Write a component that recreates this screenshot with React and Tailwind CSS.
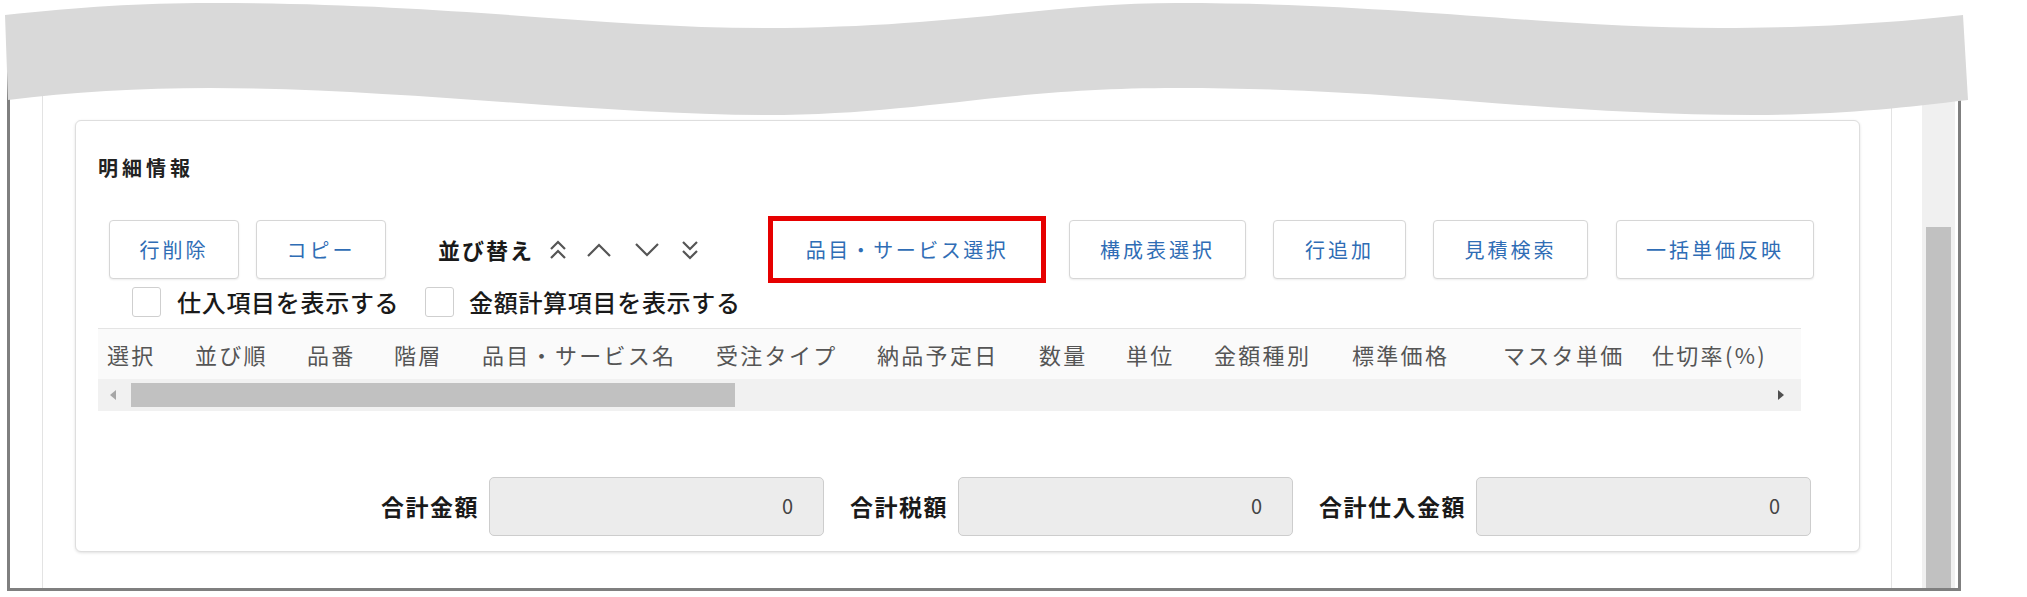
import React from "react";

const columns = [
    { label: "選択", w: "w-[88px]" },
    { label: "並び順", w: "w-[112px]" },
    { label: "品番", w: "w-[87px]" },
    { label: "階層", w: "w-[88px]" },
    { label: "品目・サービス名", w: "w-[234px]" },
    { label: "受注タイプ", w: "w-[161px]" },
    { label: "納品予定日", w: "w-[162px]" },
    { label: "数量", w: "w-[87px]" },
    { label: "単位", w: "w-[88px]" },
    { label: "金額種別", w: "w-[138px]" },
    { label: "標準価格", w: "w-[151px]" },
    { label: "マスタ単価", w: "w-[149px]" },
    { label: "仕切率(%)", w: "w-[120px]" },
];

function ActionButton({ children, className = "" }) {
    return (
        <button
            className={`h-[59px] shrink-0 bg-white border border-[#d6d6d6] rounded-[4px] shadow-[0_1px_2px_rgba(0,0,0,0.08)] text-[#2f6db5] text-[20px] tracking-[3px] ${className}`}
        >
            {children}
        </button>
    );
}

function Checkbox({ className = "" }) {
    return (
        <span className={`block w-[29px] h-[30px] shrink-0 bg-white border border-[#cfcfcf] rounded-[3px] ${className}`} />
    );
}

function TotalField({ label, className = "" }) {
    return (
        <div className={`flex items-center gap-[10px] ${className}`}>
            <span className="text-[23px] tracking-[1.5px] font-bold text-[#1a1a1a]">{label}</span>
            <div className="w-[335px] h-[59px] bg-[#ececec] border border-[#cdcdcd] rounded-[5px] flex items-center justify-end pr-[30px] text-[20px] text-[#444]">
                0
            </div>
        </div>
    );
}

export default function App() {
    return (
        <div className="relative w-[2027px] h-[597px] bg-white overflow-hidden font-['Noto_Sans_CJK_JP',sans-serif]">
            {/* screenshot frame */}
            <div className="pt-[40px] pl-[7px]">
                <div className="w-[1954px] h-[551px] border-[3px] border-t-0 border-[#7f7f7f] bg-white flex">
                    <div className="w-[32px] shrink-0" />
                    <div className="w-[1850px] shrink-0 border-x border-[#e3e3e3] pt-[80px] pl-[32px]">
                        {/* 明細情報 card */}
                        <div className="w-[1785px] bg-white border border-[#dedede] rounded-[6px] shadow-[0_1px_3px_rgba(0,0,0,0.12)] pt-[33px] pl-[22px] pb-[15px]">
                            <h2 className="h-[28px] leading-[28px] text-[20px] tracking-[4px] font-semibold text-[#222]">
                                明細情報
                            </h2>

                            {/* buttons */}
                            <div className="mt-[34px] h-[67px] ml-[11px] flex items-center">
                                <ActionButton className="w-[130px]">行削除</ActionButton>
                                <ActionButton className="w-[130px] ml-[17px]">コピー</ActionButton>
                                <div className="w-[330px] ml-[52px] shrink-0 flex items-center">
                                    <span className="w-[96px] text-[22px] tracking-[2px] font-bold text-[#1a1a1a] whitespace-nowrap">
                                        並び替え
                                    </span>
                                    <svg className="ml-[14px]" width="20" height="22" viewBox="0 0 20 22" fill="none" stroke="#555" strokeWidth="2.2">
                                        <path d="M3 10 L10 3 L17 10" />
                                        <path d="M3 19 L10 12 L17 19" />
                                    </svg>
                                    <svg className="ml-[17px]" width="28" height="16" viewBox="0 0 28 16" fill="none" stroke="#555" strokeWidth="2.2">
                                        <path d="M3 14 L14 3 L25 14" />
                                    </svg>
                                    <svg className="ml-[20px]" width="28" height="16" viewBox="0 0 28 16" fill="none" stroke="#555" strokeWidth="2.2">
                                        <path d="M3 2 L14 13 L25 2" />
                                    </svg>
                                    <svg className="ml-[19px]" width="20" height="22" viewBox="0 0 20 22" fill="none" stroke="#555" strokeWidth="2.2">
                                        <path d="M3 3 L10 10 L17 3" />
                                        <path d="M3 12 L10 19 L17 12" />
                                    </svg>
                                </div>
                                <div className="w-[278px] h-[67px] shrink-0 border-[5px] border-[#e60000] flex items-center justify-center bg-white">
                                    <span className="text-[#2f6db5] text-[20px] tracking-[2.5px]">品目・サービス選択</span>
                                </div>
                                <ActionButton className="w-[177px] ml-[23px]">構成表選択</ActionButton>
                                <ActionButton className="w-[133px] ml-[27px]">行追加</ActionButton>
                                <ActionButton className="w-[155px] ml-[27px]">見積検索</ActionButton>
                                <ActionButton className="w-[198px] ml-[28px]">一括単価反映</ActionButton>
                            </div>

                            {/* checkboxes */}
                            <div className="mt-[4px] h-[30px] flex items-center text-[24px] tracking-[0.7px] font-medium text-[#1a1a1a]">
                                <Checkbox className="ml-[34px]" />
                                <span className="ml-[16px] w-[222px] whitespace-nowrap">仕入項目を表示する</span>
                                <Checkbox className="ml-[26px]" />
                                <span className="ml-[15px] whitespace-nowrap">金額計算項目を表示する</span>
                            </div>

                            {/* table */}
                            <div className="mt-[11px] w-[1703px] border-t border-[#e4e4e4]">
                                <div className="h-[50px] bg-[#fafafa] flex items-center pl-[9px] text-[22px] tracking-[2.3px] text-[#555]">
                                    {columns.map((c) => (
                                        <span key={c.label} className={`${c.w} shrink-0 whitespace-nowrap`}>
                                            {c.label}
                                        </span>
                                    ))}
                                </div>
                                <div className="h-[32px] bg-[#f1f1f1] flex items-center">
                                    <svg className="ml-[12px]" width="6" height="10" viewBox="0 0 6 10">
                                        <path d="M6 0 L0 5 L6 10 Z" fill="#a6a6a6" />
                                    </svg>
                                    <div className="ml-[15px] w-[604px] h-[24px] bg-[#c1c1c1]" />
                                    <div className="flex-1" />
                                    <svg className="mr-[17px]" width="6" height="10" viewBox="0 0 6 10">
                                        <path d="M0 0 L6 5 L0 10 Z" fill="#505050" />
                                    </svg>
                                </div>
                            </div>

                            {/* totals */}
                            <div className="mt-[65px] h-[60px] flex items-center justify-end pr-[48px]">
                                <TotalField label="合計金額" />
                                <TotalField label="合計税額" className="ml-[26px]" />
                                <TotalField label="合計仕入金額" className="ml-[26px]" />
                            </div>
                        </div>
                    </div>
                    <div className="w-[30px] shrink-0" />
                    {/* vertical scrollbar */}
                    <div className="w-[33px] shrink-0 bg-[#f0f0f0] flex flex-col">
                        <div className="h-[187px]" />
                        <div className="mx-[4px] flex-1 bg-[#c1c1c1]" />
                    </div>
                </div>
            </div>

            {/* torn edge overlay */}
            <svg className="absolute left-0 top-0" width="2027" height="130" viewBox="0 0 2027 130">
                <path
                    d="M5,15 C80,7 140,3 210,3 C450,3 600,28 765,28 C950,28 1050,3 1177,3 C1400,3 1550,28 1720,28 C1820,28 1900,22 1963,15 L1968,100 C1900,108 1840,115 1753,115 C1550,115 1400,88 1177,88 C1000,88 920,115 765,115 C600,115 400,88 210,88 C140,88 70,92 8,100 Z"
                    fill="#d9d9d9"
                />
            </svg>
        </div>
    );
}
